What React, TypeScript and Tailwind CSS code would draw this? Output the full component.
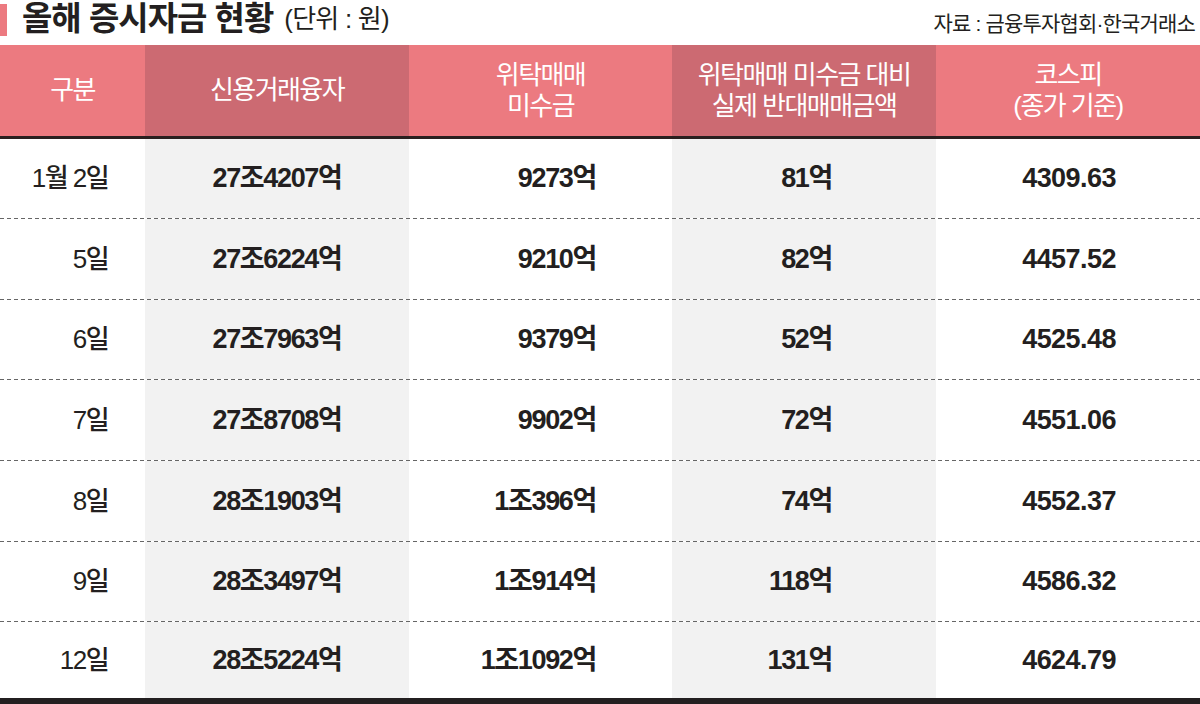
const ROWS = [
  ["1월 2일", "27조4207억", "9273억", "81억", "4309.63"],
  ["5일", "27조6224억", "9210억", "82억", "4457.52"],
  ["6일", "27조7963억", "9379억", "52억", "4525.48"],
  ["7일", "27조8708억", "9902억", "72억", "4551.06"],
  ["8일", "28조1903억", "1조396억", "74억", "4552.37"],
  ["9일", "28조3497억", "1조914억", "118억", "4586.32"],
  ["12일", "28조5224억", "1조1092억", "131억", "4624.79"],
];

// row heights measured off the dashed rules; the last one fills to the bottom rule
const ROW_H = ["h-[79px]", "h-[80px]", "h-[79px]", "h-[80px]", "h-[80px]", "h-[79px]", "h-[76px]"];

const FONT = { fontFamily: '"Liberation Sans", "Noto Sans CJK KR", sans-serif' };

const COLS = "grid grid-cols-[145px_264px_263px_264px_264px]";

export default function App() {
  return (
    <div className="w-[1200px] h-[704px] bg-white text-[#231f20] overflow-hidden" style={FONT}>
      {/* Title bar */}
      <div className="h-[45px] flex items-start justify-between">
        <div className="flex items-center">
          <div className="w-[7px] h-[32px] bg-[#ec7a80] mt-[4px] self-start" />
          <h1 className="text-[33px] font-bold tracking-[-0.03em] leading-[38px] ml-[15px]">
            올해 증시자금 현황
          </h1>
          <span className="text-[26px] tracking-[-0.03em] leading-[38px] ml-[11px]">(단위 : 원)</span>
        </div>
        <div className="text-[21px] tracking-[-0.04em] pt-[10px] pr-[5px] leading-[28px]">
          자료 : 금융투자협회·한국거래소
        </div>
      </div>

      {/* Table */}
      <div className="border-b-[6px] border-[#231f20]">
        <div className={`${COLS} h-[94px] border-b-[3px] border-[#2a1f1f] text-white text-[26px] leading-[31px] tracking-[-0.06em] text-center`}>
          <div className="bg-[#ec7a80] flex items-center justify-center">구분</div>
          <div className="bg-[#cc6a72] flex items-center justify-center">신용거래융자</div>
          <div className="bg-[#ec7a80] flex items-center justify-center">
            위탁매매
            <br />
            미수금
          </div>
          <div className="bg-[#cc6a72] flex items-center justify-center">
            위탁매매 미수금 대비
            <br />
            실제 반대매매금액
          </div>
          <div className="bg-[#ec7a80] flex items-center justify-center">
            코스피
            <br />
            (종가 기준)
          </div>
        </div>

        {ROWS.map((r, i) => (
          <div key={i}>
            <div className={`${COLS} ${ROW_H[i]} text-[27px] font-bold tracking-[-0.05em]`}>
              <div className="flex items-center justify-end pr-[37px] font-medium text-[26px] tracking-[-0.06em]">
                {r[0]}
              </div>
              <div className="bg-[#f2f2f2] flex items-center justify-center">{r[1]}</div>
              <div className="flex items-center justify-end pr-[76px]">{r[2]}</div>
              <div className="bg-[#f2f2f2] flex items-center justify-end pr-[104px]">{r[3]}</div>
              <div className="flex items-center justify-end pr-[84px] tracking-[-0.02em]">{r[4]}</div>
            </div>
            {i < ROWS.length - 1 && (
              <div className="h-px bg-[repeating-linear-gradient(90deg,#666_0_4px,transparent_4px_7px)]" />
            )}
          </div>
        ))}
      </div>
    </div>
  );
}
